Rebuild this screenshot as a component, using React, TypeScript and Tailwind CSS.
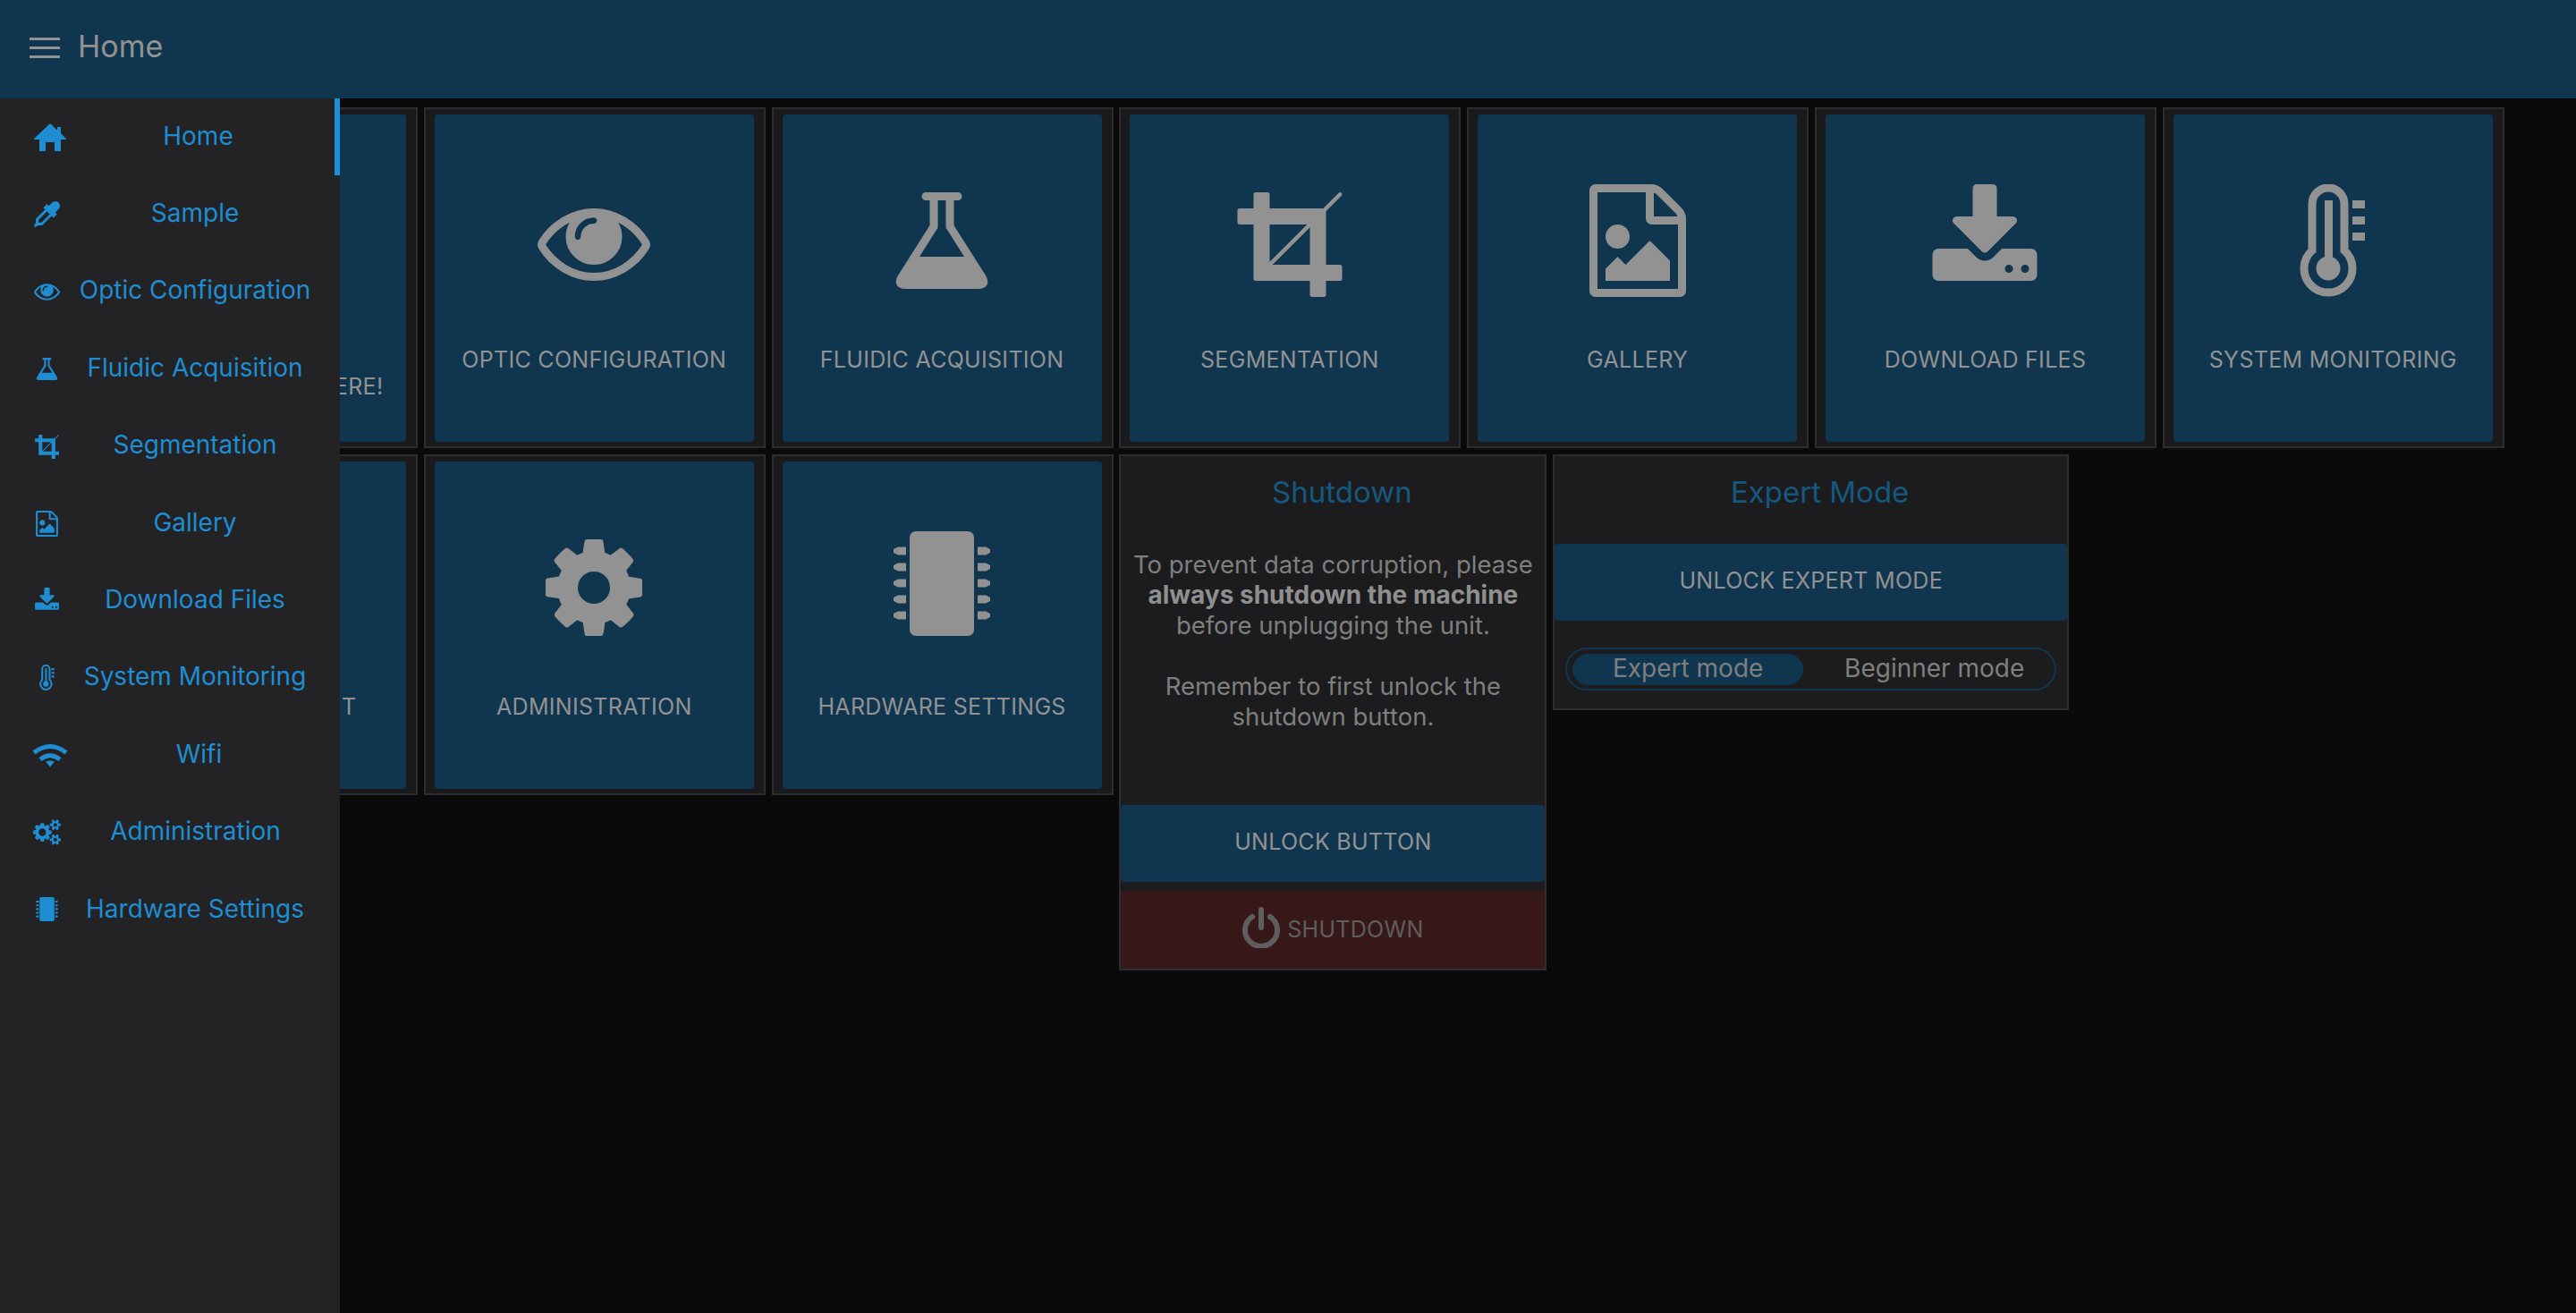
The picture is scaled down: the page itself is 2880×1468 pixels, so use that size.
import { ReactNode } from 'react';

const FONT = 'font-["Inter","Liberation_Sans",sans-serif]';

// glyphs sit in a 1792 unit em box, same as the icon font the dashboard uses
const FA: Record<string, string> = {
  eye: 'M1664 960q-152-236-381-353 61 104 61 225 0 185-131.5 316.5t-316.5 131.5-316.5-131.5-131.5-316.5q0-121 61-225-229 117-381 353 133 205 333.5 326.5t434.5 121.5 434.5-121.5 333.5-326.5zm-720-384q0-20-14-34t-34-14q-125 0-214.5 89.5t-89.5 214.5q0 20 14 34t34 14 34-14 14-34q0-86 61-147t147-61q20 0 34-14t14-34zm848 384q0 34-20 69-140 230-376.5 368.5t-499.5 138.5-499.5-139-376.5-368q-20-35-20-69t20-69q140-229 376.5-368t499.5-139 499.5 139 376.5 368q20 35 20 69z',
  flask: 'M1591 1448q56 89 21.5 152.5t-140.5 63.5h-1152q-106 0-140.5-63.5t21.5-152.5l503-793v-399h-64q-26 0-45-19t-19-45 19-45 45-19h512q26 0 45 19t19 45-19 45-45 19h-64v399zm-779-725l-272 429h712l-272-429-20-31v-436h-128v436z',
  crop: 'M621 1280h595v-595zm-45-45l595-595h-595v595zm1152 77v192q0 14-9 23t-23 9h-224v224q0 14-9 23t-23 9h-192q-14 0-23-9t-9-23v-224h-864q-14 0-23-9t-9-23v-864h-224q-14 0-23-9t-9-23v-192q0-14 9-23t23-9h224v-224q0-14 9-23t23-9h192q14 0 23 9t9 23v224h851l246-247q10-9 23-9t23 9q9 10 9 23t-9 23l-247 246v851h224q14 0 23 9t9 23z',
  image: 'M1596 380q28 28 48 76t20 88v1152q0 40-28 68t-68 28h-1344q-40 0-68-28t-28-68v-1600q0-40 28-68t68-28h896q40 0 88 20t76 48zm-444-244v376h376q-10-29-22-41l-313-313q-12-12-41-22zm384 1528v-1024h-416q-40 0-68-28t-28-68v-416h-768v1536h1280zm-128-448v320h-1024v-192l192-192 128 128 384-384zm-832-192q-80 0-136-56t-56-136 56-136 136-56 136 56 56 136-56 136-136 56z',
  download: 'M1344 1344q0-26-19-45t-45-19-45 19-19 45 19 45 45 19 45-19 19-45zm256 0q0-26-19-45t-45-19-45 19-19 45 19 45 45 19 45-19 19-45zm128-224v320q0 40-28 68t-68 28h-1472q-40 0-68-28t-28-68v-320q0-40 28-68t68-28h465l135 136q58 56 136 56t136-56l136-136h464q40 0 68 28t28 68zm-325-569q17 41-14 70l-448 448q-18 19-45 19t-45-19l-448-448q-31-29-14-70 17-39 59-39h256v-448q0-26 19-45t45-19h256q26 0 45 19t19 45v448h256q42 0 59 39z',
  cog: 'M1152 896q0-106-75-181t-181-75-181 75-75 181 75 181 181 75 181-75 75-181zm512-109v222q0 12-8 23t-20 13l-185 28q-19 54-39 91 35 50 107 138 10 12 10 25t-9 23q-27 37-99 108t-94 71q-12 0-26-9l-138-108q-44 23-91 38-16 136-29 186-7 28-36 28h-222q-14 0-24.5-8.5t-11.5-21.5l-28-184q-49-16-90-37l-141 107q-10 9-25 9-14 0-25-11-126-114-165-168-7-10-7-23 0-12 8-23 15-21 51-66.5t54-70.5q-27-50-41-99l-183-27q-13-2-21-12.5t-8-23.5v-222q0-12 8-23t19-13l186-28q14-46 39-92-40-57-107-138-10-12-10-24 0-10 9-23 26-36 98.5-107.5t94.5-71.5q13 0 26 10l138 107q44-23 91-38 16-136 29-186 7-28 36-28h222q14 0 24.5 8.5t11.5 21.5l28 184q49 16 90 37l142-107q9-9 24-9 13 0 25 10 129 119 165 170 7 8 7 22 0 12-8 23-15 21-51 66.5t-54 70.5q26 50 41 98l183 28q13 2 21 12.5t8 23.5z',
  dropper: 'M1698 94q94 94 94 226.5t-94 225.5l-225 223 104 104q10 10 10 23t-10 23l-210 210q-10 10-23 10t-23-10l-105-105-603 603q-37 37-90 37h-203l-256 128-64-64 128-256v-203q0-53 37-90l603-603-105-105q-10-10-10-23t10-23l210-210q10-10 23-10t23 10l104 104 223-225q93-94 225.5-94t226.5 94zm-1186 1378l576-576-192-192-576 576v192h192z',
};

const COGS = 'M896 896q0-106-75-181t-181-75-181 75-75 181 75 181 181 75 181-75 75-181zm768 512q0-52-38-90t-90-38-90 38-38 90q0 53 37.5 90.5t90.5 37.5 90.5-37.5 37.5-90.5zm0-1024q0-52-38-90t-90-38-90 38-38 90q0 53 37.5 90.5t90.5 37.5 90.5-37.5 37.5-90.5zm-384 421v185q0 10-7 19.5t-16 10.5l-155 24q-11 35-32 76 34 48 90 115 7 11 7 20 0 12-7 19-23 30-82.5 89.5t-78.5 59.5q-11 0-21-7l-115-90q-37 19-77 31-11 108-23 155-7 24-30 24h-186q-11 0-20-7.5t-10-17.5l-23-153q-34-10-75-31l-118 89q-7 7-20 7-11 0-21-8-144-133-144-160 0-9 7-19 10-14 41-53t47-61q-23-44-35-82l-152-24q-10-1-17-9.5t-7-19.5v-185q0-10 7-19.5t16-10.5l155-24q11-35 32-76-34-48-90-115-7-11-7-20 0-12 7-20 22-30 82-89t79-59q11 0 21 7l115 90q34-18 77-32 11-108 23-154 7-24 30-24h186q11 0 20 7.5t10 17.5l23 153q34 10 75 31l118-89q8-7 20-7 11 0 21 8 144 133 144 160 0 8-7 19-12 16-42 54t-45 60q23 48 34 82l152 23q10 2 17 10.5t7 19.5zm640 533v140q0 16-149 31-12 27-30 52 51 113 51 138 0 4-4 7-122 71-124 71-8 0-46-47t-52-68q-20 2-30 2t-30-2q-14 21-52 68t-46 47q-2 0-124-71-4-3-4-7 0-25 51-138-18-25-30-52-149-15-149-31v-140q0-16 149-31 13-29 30-52-51-113-51-138 0-4 4-7 4-2 35-20t59-34 30-16q8 0 46 46.5t52 67.5q20-2 30-2t30 2q51-71 92-112l6-2q4 0 124 70 4 3 4 7 0 25-51 138 17 23 30 52 149 15 149 31zm0-1024v140q0 16-149 31-12 27-30 52 51 113 51 138 0 4-4 7-122 71-124 71-8 0-46-47t-52-68q-20 2-30 2t-30-2q-14 21-52 68t-46 47q-2 0-124-71-4-3-4-7 0-25 51-138-18-25-30-52-149-15-149-31v-140q0-16 149-31 13-29 30-52-51-113-51-138 0-4 4-7 4-2 35-20t59-34 30-16q8 0 46 46.5t52 67.5q20-2 30-2t30 2q51-71 92-112l6-2q4 0 124 70 4 3 4 7 0 25-51 138 17 23 30 52 149 15 149 31z';

const Fa = ({ name, className }: { name: string; className: string }) => (
  <svg viewBox="0 0 1792 1792" className={className} fill="currentColor">
    <path d={FA[name]} />
  </svg>
);

const Cogs = ({ className }: { className: string }) => (
  <svg viewBox="0 0 1920 1792" className={className} fill="currentColor">
    <path d={COGS} />
  </svg>
);

const Thermo = ({ className }: { className: string }) => (
  <svg viewBox="0 0 126 126" className={className} fill="currentColor">
    <g transform="translate(27 0)">
      <path d="M13 74V22a18 18 0 0 1 36 0V74a27 27 0 1 1-36 0Z" fill="none" stroke="currentColor" strokeWidth="9" />
      <rect x="27" y="18" width="9" height="70" />
      <ellipse cx="31" cy="94" rx="13.5" ry="13.5" />
      <rect x="58" y="18" width="14" height="9" />
      <rect x="58" y="36" width="14" height="9" />
      <rect x="58" y="54" width="14" height="9" />
    </g>
  </svg>
);

const Chip = ({ className }: { className: string }) => (
  <svg viewBox="0 0 126 126" className={className} fill="currentColor">
    <g transform="translate(9 0)">
      <rect x="18" y="0" width="72" height="117" rx="7" />
      {[22, 40, 58, 76, 94].map((y) => (
        <g key={y}>
          <path d={`M14 ${y - 4.5}V${y + 4.5}H5L0 ${y + 2}V${y - 2}L5 ${y - 4.5}Z`} />
          <path d={`M94 ${y - 4.5}V${y + 4.5}H103L108 ${y + 2}V${y - 2}L103 ${y - 4.5}Z`} />
        </g>
      ))}
    </g>
  </svg>
);

const Home = ({ className }: { className: string }) => (
  <svg viewBox="0 0 36 31" className={className} fill="currentColor">
    <path d="M18 0 26 7.500V4h4v7L36 17V18H30V31H23V21H13V31H6V18H0V17Z" />
  </svg>
);

const Wifi = ({ className }: { className: string }) => (
  <svg viewBox="0 0 40 27" className={className}>
    <g fill="none" stroke="currentColor" strokeWidth="5">
      <path d="M2 10.500Q20 -3.500 38 10.500" />
      <path d="M9 18Q20 9.500 31 18" />
    </g>
    <path d="M15 20.500Q20 18.500 25 20.500L20 26.500Z" fill="currentColor" />
  </svg>
);

const ICON_CLASS = 'w-[126px] h-[126px] text-[#929292]';
const SIDE_CLASS = 'w-[29px] h-[29px]';

const Card = ({ icon, label, extra }: { icon?: ReactNode; label: string; extra?: string }) => (
  <div className="w-[382px] h-[381px] shrink-0 border-2 border-[#2d2d2f] bg-[#1a1a1c] pl-[10px] pr-[11px] pt-[6px] pb-[5px]">
    <div className="h-full rounded-[4px] bg-[#10364f] pt-[78px] flex flex-col items-center">
      <div className="h-[126px] w-[126px]">{icon}</div>
      <div className="mt-[53px] text-[25px] tracking-[0.3px] leading-[34px] text-[#929292] text-center whitespace-nowrap">
        {label}
        {extra && <div className="leading-[26px]">{extra}</div>}
      </div>
    </div>
  </div>
);

const NAV: { label: string; slot: string; icon: ReactNode }[] = [
  { label: 'Home', slot: 'w-[36px]', icon: <Home className="w-[36px] h-[31px]" /> },
  { label: 'Sample', slot: 'w-[29px]', icon: <Fa name="dropper" className={SIDE_CLASS} /> },
  { label: 'Optic Configuration', slot: 'w-[29px]', icon: <Fa name="eye" className={SIDE_CLASS} /> },
  { label: 'Fluidic Acquisition', slot: 'w-[29px]', icon: <Fa name="flask" className={SIDE_CLASS} /> },
  { label: 'Segmentation', slot: 'w-[29px]', icon: <Fa name="crop" className={SIDE_CLASS} /> },
  { label: 'Gallery', slot: 'w-[29px]', icon: <Fa name="image" className={SIDE_CLASS} /> },
  { label: 'Download Files', slot: 'w-[29px]', icon: <Fa name="download" className={SIDE_CLASS} /> },
  { label: 'System Monitoring', slot: 'w-[29px]', icon: <Thermo className={SIDE_CLASS} /> },
  { label: 'Wifi', slot: 'w-[40px] -ml-[2px]', icon: <Wifi className="w-[40px] h-[27px]" /> },
  { label: 'Administration', slot: 'w-[31px] -ml-[1px]', icon: <Cogs className="w-[31px] h-[29px]" /> },
  { label: 'Hardware Settings', slot: 'w-[29px]', icon: <Chip className={SIDE_CLASS} /> },
];

export default function App() {
  return (
    <div className={`relative w-[2880px] h-[1468px] overflow-hidden bg-[#0a0a0c] ${FONT}`}>
      {/* Top bar */}
      <header className="h-[110px] bg-[#10364f] flex items-center pl-[33px] pb-[6px] gap-[20px] text-[#929292]">
        <div className="w-[34px] mt-[2px] flex flex-col gap-[7px]">
          <span className="h-[3px] bg-[#929292]" />
          <span className="h-[3px] bg-[#929292]" />
          <span className="h-[3px] bg-[#929292]" />
        </div>
        <span className="text-[34px] leading-none">Home</span>
      </header>

      {/* Page content, runs under the open drawer */}
      <main className="pl-[85px] pt-[10px] flex flex-col gap-[7px]">
        <div className="flex gap-[6.8px] items-start">
          <Card label="SAMPLE" extra="YOU MUST START HERE!" />
          <Card label="OPTIC CONFIGURATION" icon={<Fa name="eye" className={ICON_CLASS} />} />
          <Card label="FLUIDIC ACQUISITION" icon={<Fa name="flask" className={ICON_CLASS} />} />
          <Card label="SEGMENTATION" icon={<Fa name="crop" className={ICON_CLASS} />} />
          <Card label="GALLERY" icon={<Fa name="image" className={ICON_CLASS} />} />
          <Card label="DOWNLOAD FILES" icon={<Fa name="download" className={ICON_CLASS} />} />
          <Card label="SYSTEM MONITORING" icon={<Thermo className={ICON_CLASS} />} />
        </div>
        <div className="flex gap-[6.8px] items-start">
          <Card label="WIFI MANAGEMENT" />
          <Card label="ADMINISTRATION" icon={<Fa name="cog" className={ICON_CLASS} />} />
          <Card label="HARDWARE SETTINGS" icon={<Chip className={ICON_CLASS} />} />

          {/* Shutdown */}
          <section className="w-[478px] h-[577px] shrink-0 border-2 border-[#2d2d2f] bg-[#1c1c1e] flex flex-col">
            <h2 className="mt-[20px] pl-[20px] text-center text-[33px] leading-[40px] text-[#14587f]">Shutdown</h2>
            <p className="mt-[44px] text-center text-[27.500px] leading-[34px] text-[#7f7f7f] whitespace-nowrap">
              To prevent data corruption, please
              <br />
              <b className="font-bold text-[28px] text-[#8f8f8f]">always shutdown the machine</b>
              <br />
              before unplugging the unit.
              <br />
              <br />
              Remember to first unlock the
              <br />
              shutdown button.
            </p>
            <button className="mt-[82px] h-[86px] pb-[3px] rounded-[4px] bg-[#10364f] text-[25px] tracking-[0.3px] text-[#929292]">UNLOCK BUTTON</button>
            <div className="mt-[10px] flex-1 bg-[#371819] flex items-center justify-center gap-[8px] text-[#5e5e5e]">
              <svg viewBox="0 0 42 46" className="w-[42px] h-[46px] -mt-[6px]" fill="none" stroke="currentColor" strokeWidth="6" strokeLinecap="round">
                <path d="M21 3V23" />
                <path d="M11 11a18 18 0 1 0 20 0" />
              </svg>
              <span className="text-[25px] tracking-[0.3px]">SHUTDOWN</span>
            </div>
          </section>

          {/* Expert mode */}
          <section className="w-[577px] h-[286px] shrink-0 border-2 border-[#2d2d2f] bg-[#1c1c1e] flex flex-col">
            <h2 className="mt-[20px] pl-[20px] text-center text-[33px] leading-[40px] text-[#14587f]">Expert Mode</h2>
            <button className="mt-[38px] h-[86px] pb-[3px] rounded-[4px] bg-[#10364f] text-[25px] tracking-[0.3px] text-[#929292]">UNLOCK EXPERT MODE</button>
            <div className="mx-[12px] mt-[30px] h-[48px] rounded-full border-2 border-[#10364f] flex items-center px-[6px] text-[28px] text-[#7f7f7f]">
              <span className="w-[258px] h-[35px] pb-[3px] rounded-full bg-[#10364f] flex items-center justify-center">Expert mode</span>
              <span className="flex-1 pl-[18px] pb-[3px] text-center">Beginner mode</span>
            </div>
          </section>
        </div>
      </main>

      {/* Open drawer */}
      <aside className="absolute left-0 top-[110px] bottom-0 w-[380px] bg-[#232325] text-[#1e8dd2]">
        <span className="absolute right-0 top-0 w-[6px] h-[86px] bg-[#1e8dd2]" />
        <nav className="flex flex-col">
          {NAV.map((item) => (
            <div key={item.label} className="h-[86.4px] flex items-center pl-[38px] pr-[11px]">
              <span className={`${item.slot} shrink-0 flex items-center justify-center`}>{item.icon}</span>
              <span className="flex-1 pb-[3px] text-center text-[28px] whitespace-nowrap">{item.label}</span>
            </div>
          ))}
        </nav>
      </aside>
    </div>
  );
}
